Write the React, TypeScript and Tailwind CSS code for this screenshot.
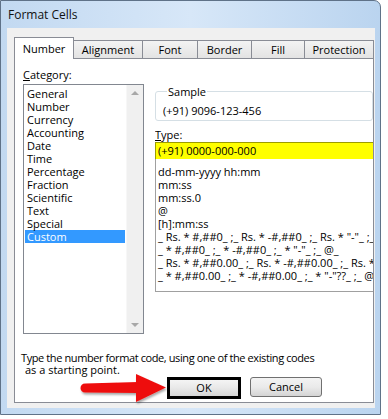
const tabs = [
  { label: 'Number', w: 'w-[60px]', active: true },
  { label: 'Alignment', w: 'w-[69px]', active: false },
  { label: 'Font', w: 'w-[55px]', active: false },
  { label: 'Border', w: 'w-[54px]', active: false },
  { label: 'Fill', w: 'w-[53px]', active: false },
  { label: 'Protection', w: 'w-[69px]', active: false },
]

const categories = [
  'General',
  'Number',
  'Currency',
  'Accounting',
  'Date',
  'Time',
  'Percentage',
  'Fraction',
  'Scientific',
  'Text',
  'Special',
  'Custom',
]

const formats = [
  'dd-mm-yyyy hh:mm',
  'mm:ss',
  'mm:ss.0',
  '@',
  '[h]:mm:ss',
  '_ Rs. * #,##0_ ;_ Rs. * -#,##0_ ;_ Rs. * "-"_ ;_ @_',
  '_ * #,##0_ ;_ * -#,##0_ ;_ * "-"_ ;_ @_',
  '_ Rs. * #,##0.00_ ;_ Rs. * -#,##0.00_ ;_ Rs. * "-"??_ ;_ @_',
  '_ * #,##0.00_ ;_ * -#,##0.00_ ;_ * "-"??_ ;_ @_',
]

function Arrow() {
  return (
    <svg width="89" height="34" viewBox="0 0 89 34" className="shrink-0">
      <defs>
        <filter id="sh" x="-10%" y="-20%" width="130%" height="150%">
          <feDropShadow dx="1" dy="2" stdDeviation="1.2" floodColor="#000" floodOpacity="0.35" />
        </filter>
      </defs>
      <g filter="url(#sh)" fill="#ee1111">
        <path d="M7,12.5 L60,11 L60,22 L7,21.5 A4.5,4.5 0 0 1 7,12.5 Z" />
        <path d="M58,3 L88,16.5 L58,31 Z" />
      </g>
    </svg>
  )
}

export default function App() {
  return (
    <div className="w-[388px] h-[419px] bg-white overflow-hidden font-['Open_Sans',sans-serif] text-[11px] text-black">
      <div className="w-[381px] h-[415px] flex flex-col rounded-tr-[7px] border border-[#5f7288] bg-gradient-to-r from-[#c2d9f1] via-[#d7e7f8] to-[#bad4ef]">
        {/* title bar */}
        <div className="h-[27px] flex items-center pl-[7px] pt-[1px] text-[12px] text-[#111]">
          Format Cells
        </div>

        {/* client area */}
        <div className="flex-1 ml-[6px] mr-[5px] mb-[6px] bg-[#f0f0f0] flex flex-col pt-[9px] pl-[7px] pr-[1px] pb-[5px]">
          {/* tabs */}
          <div className="flex items-end h-[22px]">
            {tabs.map((t, i) =>
              t.active ? (
                <div
                  key={t.label}
                  className={`${t.w} h-[22px] bg-white border-l border-t border-r border-[#898c95] flex items-center justify-center pt-[2px]`}
                >
                  {t.label}
                </div>
              ) : (
                <div
                  key={t.label}
                  className={`${t.w} h-[19px] border-t border-r border-b border-[#898c95] bg-gradient-to-b from-[#f3f3f3] to-[#e3e3e3] flex items-center justify-center pt-[1px] ${i === 0 ? 'border-l' : ''}`}
                >
                  {t.label}
                </div>
              )
            )}
          </div>

          {/* tab page */}
          <div className="flex-1 bg-white border-l border-r border-b border-[#898c95] flex flex-col pb-[3px]">
            <div className="flex pt-[9px] pl-[8px] gap-[11px]">
              {/* category */}
              <div className="w-[121px] shrink-0 flex flex-col">
                <div className="h-[13px] leading-[13px]">
                  <span className="underline">C</span>ategory:
                </div>
                <div className="mt-[3px] h-[250px] border border-[#828790] flex">
                  <div className="flex-1 pt-[2px] px-[1px]">
                    {categories.map((c) => (
                      <div
                        key={c}
                        className={`h-[13px] leading-[13px] pl-[2px] ${c === 'Custom' ? 'bg-[#3399ff] text-white' : ''}`}
                      >
                        {c}
                      </div>
                    ))}
                  </div>
                  <div className="w-[17px] bg-[#f0f0f0] border-l border-[#f7f7f7] flex flex-col justify-between items-center py-[6px]">
                    <div className="w-0 h-0 border-l-[4px] border-r-[4px] border-b-[4px] border-l-transparent border-r-transparent border-b-[#a8a8a8]" />
                    <div className="w-0 h-0 border-l-[4px] border-r-[4px] border-t-[4px] border-l-transparent border-r-transparent border-t-[#a8a8a8]" />
                  </div>
                </div>
              </div>

              {/* type column */}
              <div className="flex-1 min-w-0 overflow-hidden flex flex-col">
                <fieldset className="mt-[17px] border border-[#d5dfe5] rounded-[3px] pl-[7px] pt-[6px] pb-[3px]">
                  <legend className="ml-[4px] px-[1px] h-[13px] leading-[13px]">Sample</legend>
                  <div className="h-[13px] leading-[13px]">(+91) 9096-123-456</div>
                </fieldset>
                <div className="mt-[7px] h-[13px] leading-[13px]">
                  <span className="underline">T</span>ype:
                </div>
                <div className="mt-[1px] w-[240px] h-[17px] bg-[#ffff00] border-t border-l border-[#9c9c00] pl-[2px] leading-[16px]">
                  (+91) 0000-000-000
                </div>
                <div className="w-[240px] h-[133px] border-l border-b border-[#a0a0a0] pt-[6px] pl-[2px]">
                  {formats.map((f) => (
                    <div key={f} className="h-[13px] leading-[13px] whitespace-pre">
                      {f}
                    </div>
                  ))}
                </div>
              </div>
            </div>

            <div className="mt-[18px] pl-[6px] leading-[12px]">
              <div className="tracking-[-0.4px]">Type the number format code, using one of the existing codes</div>
              <div className="pl-[4px]">as a starting point.</div>
            </div>

            <div className="mt-[1px] h-[22px] flex items-center pl-[63px]">
              <Arrow />
              <button className="w-[74px] h-[22px] border-[3px] border-black bg-gradient-to-b from-[#f4f4f4] via-[#e8e8e8] to-[#d6d6d6] text-[11px]">
                OK
              </button>
              <button className="ml-[9px] self-start w-[72px] h-[20px] rounded-[3px] border border-[#707070] bg-gradient-to-b from-[#f3f3f3] via-[#eaeaea] to-[#d4d4d4] text-[11px]">
                Cancel
              </button>
            </div>
          </div>
        </div>
      </div>
    </div>
  )
}
